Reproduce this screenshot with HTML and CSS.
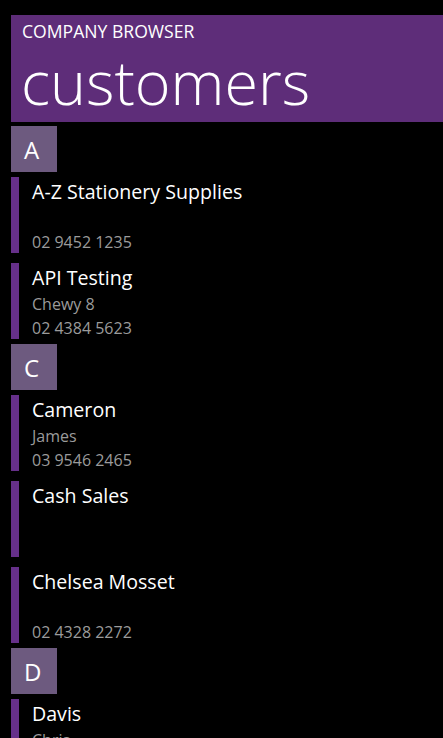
FILE: index.html
```html
<!DOCTYPE html>
<html lang="en">
<head>
  <meta charset="UTF-8">
  <title>Company Browser - customers</title>
  <link rel="stylesheet" href="styles.css">
</head>
<body>

  <div class="page">
    <header class="page-header">
      <div class="app-title">COMPANY BROWSER</div>
      <h1 class="page-title">customers</h1>
    </header>

    <section class="group">
      <div class="group-tile">A</div>
      <ul class="items">
        <li class="item">
          <div class="item-name">A-Z Stationery Supplies</div>
          <div class="item-contact"></div>
          <div class="item-phone">02 9452 1235</div>
        </li>
        <li class="item">
          <div class="item-name">API Testing</div>
          <div class="item-contact">Chewy 8</div>
          <div class="item-phone">02 4384 5623</div>
        </li>
      </ul>
    </section>

    <section class="group">
      <div class="group-tile">C</div>
      <ul class="items">
        <li class="item">
          <div class="item-name">Cameron</div>
          <div class="item-contact">James</div>
          <div class="item-phone">03 9546 2465</div>
        </li>
        <li class="item">
          <div class="item-name">Cash Sales</div>
          <div class="item-contact"></div>
          <div class="item-phone"></div>
        </li>
        <li class="item">
          <div class="item-name">Chelsea Mosset</div>
          <div class="item-contact"></div>
          <div class="item-phone">02 4328 2272</div>
        </li>
      </ul>
    </section>

    <section class="group">
      <div class="group-tile">D</div>
      <ul class="items">
        <li class="item">
          <div class="item-name">Davis</div>
          <div class="item-contact">Chris</div>
        </li>
      </ul>
    </section>
  </div>

</body>
</html>
```

FILE: styles.css
```css
html, body {
  margin: 0;
  height: 738px;
  overflow: hidden;
  background-color: #000;
}

body {
  font-family: "Open Sans", "Noto Sans", sans-serif;
  color: #fff;
}

.page {
  padding: 15px 0 0 11px;
}

.page-header {
  height: 107px;
  margin-bottom: 4px;
  padding-left: 11px;
  background-color: #5e2d79;
  box-sizing: border-box;
}

.app-title {
  font-size: 17.6px;
  line-height: 30px;
  padding-top: 1px;
}

.page-title {
  margin: 0;
  margin-left: -1px;
  font-size: 61px;
  font-weight: 300;
  line-height: 72px;
}

.group-tile {
  width: 46px;
  height: 46px;
  margin-bottom: 5px;
  padding-left: 13px;
  box-sizing: border-box;
  background-color: #6d5a7f;
  font-size: 24px;
  line-height: 47px;
}

.items {
  list-style: none;
  margin: 0;
  padding: 0;
}

.item {
  height: 76px;
  margin-bottom: 10px;
  padding-left: 13px;
  border-left: 8px solid #66308a;
  box-sizing: border-box;
}

.item:last-child {
  margin-bottom: 5px;
}

.item-name {
  font-size: 19.6px;
  line-height: 28px;
  padding-top: 1px;
}

.item-contact, .item-phone {
  font-size: 16px;
  line-height: 25px;
  min-height: 25px;
  color: #9b9b9b;
}

.item-phone {
  line-height: 22px;
  min-height: 22px;
}
```
